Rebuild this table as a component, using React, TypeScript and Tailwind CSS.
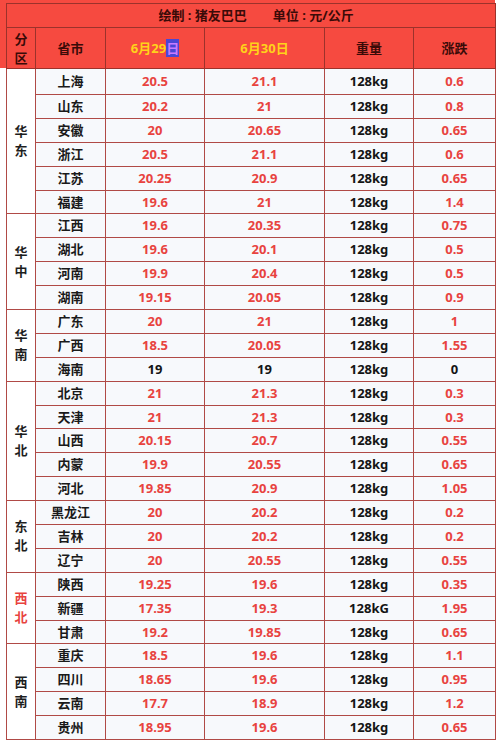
import React from 'react';

type Row = { city: string; d29: string; d30: string; kg?: string; diff: string; black?: boolean };
type Group = { region: string; red?: boolean; rows: Row[] };

const groups: Group[] = [
  {
    region: '华东',
    rows: [
      { city: '上海', d29: '20.5', d30: '21.1', diff: '0.6' },
      { city: '山东', d29: '20.2', d30: '21', diff: '0.8' },
      { city: '安徽', d29: '20', d30: '20.65', diff: '0.65' },
      { city: '浙江', d29: '20.5', d30: '21.1', diff: '0.6' },
      { city: '江苏', d29: '20.25', d30: '20.9', diff: '0.65' },
      { city: '福建', d29: '19.6', d30: '21', diff: '1.4' },
    ],
  },
  {
    region: '华中',
    rows: [
      { city: '江西', d29: '19.6', d30: '20.35', diff: '0.75' },
      { city: '湖北', d29: '19.6', d30: '20.1', diff: '0.5' },
      { city: '河南', d29: '19.9', d30: '20.4', diff: '0.5' },
      { city: '湖南', d29: '19.15', d30: '20.05', diff: '0.9' },
    ],
  },
  {
    region: '华南',
    rows: [
      { city: '广东', d29: '20', d30: '21', diff: '1' },
      { city: '广西', d29: '18.5', d30: '20.05', diff: '1.55' },
      { city: '海南', d29: '19', d30: '19', diff: '0', black: true },
    ],
  },
  {
    region: '华北',
    rows: [
      { city: '北京', d29: '21', d30: '21.3', diff: '0.3' },
      { city: '天津', d29: '21', d30: '21.3', diff: '0.3' },
      { city: '山西', d29: '20.15', d30: '20.7', diff: '0.55' },
      { city: '内蒙', d29: '19.9', d30: '20.55', diff: '0.65' },
      { city: '河北', d29: '19.85', d30: '20.9', diff: '1.05' },
    ],
  },
  {
    region: '东北',
    rows: [
      { city: '黑龙江', d29: '20', d30: '20.2', diff: '0.2' },
      { city: '吉林', d29: '20', d30: '20.2', diff: '0.2' },
      { city: '辽宁', d29: '20', d30: '20.55', diff: '0.55' },
    ],
  },
  {
    region: '西北',
    red: true,
    rows: [
      { city: '陕西', d29: '19.25', d30: '19.6', diff: '0.35' },
      { city: '新疆', d29: '17.35', d30: '19.3', kg: '128kG', diff: '1.95' },
      { city: '甘肃', d29: '19.2', d30: '19.85', diff: '0.65' },
    ],
  },
  {
    region: '西南',
    rows: [
      { city: '重庆', d29: '18.5', d30: '19.6', diff: '1.1' },
      { city: '四川', d29: '18.65', d30: '19.6', diff: '0.95' },
      { city: '云南', d29: '17.7', d30: '18.9', diff: '1.2' },
      { city: '贵州', d29: '18.95', d30: '19.6', diff: '0.65' },
    ],
  },
];

const cell = 'border border-[#b04a46] p-0 text-center align-middle';
const head = 'border border-[#9c322b] p-0 text-center align-middle text-[#3a0b08]';

export default function App() {
  let first = true;
  return (
    <div className="h-[743px] w-[500px] overflow-hidden bg-white">
      <div className="w-[495px] bg-[linear-gradient(to_bottom,#f64a40_0,#f64a40_68px,#ffffff_68px)] pl-[6px] pt-[3px]">
        <table className="w-[489px] table-fixed border-collapse font-['Noto_Sans','Noto_Sans_CJK_SC',sans-serif] text-[13px] font-bold leading-none">
          <colgroup>
            <col className="w-[29px]" />
            <col className="w-[70px]" />
            <col className="w-[99px]" />
            <col className="w-[120px]" />
            <col className="w-[89px]" />
            <col className="w-[82px]" />
          </colgroup>
          <thead>
            <tr className="h-[24px] bg-[#f64a40]">
              <td colSpan={6} className={head}>
                <div className="flex justify-center gap-[26px] pl-[10px]">
                  <span>绘制 : 猪友巴巴</span>
                  <span>单位 : 元/公斤</span>
                </div>
              </td>
            </tr>
            <tr className="h-[41px] bg-[#f64a40]">
              <td className={head}>
                <div className="flex flex-col items-center gap-[6px] pt-[2px]">
                  <span>分</span>
                  <span>区</span>
                </div>
              </td>
              <td className={head}>省市</td>
              <td className={head}>
                <span className="text-[#ffd21a]">6月29</span>
                <span className="bg-[#4b46d6] text-[#c77cff]">日</span>
              </td>
              <td className={`${head} text-[#ffd21a]`}>6月30日</td>
              <td className={head}>重量</td>
              <td className={head}>涨跌</td>
            </tr>
          </thead>
          <tbody>
            {groups.map((g) =>
              g.rows.map((r, i) => {
                const h = first ? 'h-[26px]' : 'h-[23.9px]';
                first = false;
                const num = r.black ? 'text-[#141414]' : 'text-[#e8433f]';
                return (
                  <tr key={r.city} className={h}>
                    {i === 0 && (
                      <td rowSpan={g.rows.length} className={`${cell} bg-white ${g.red ? 'text-[#e8433f]' : 'text-[#1e1e1e]'}`}>
                        <div className="flex flex-col items-center gap-[6px]">
                          <span>{g.region[0]}</span>
                          <span>{g.region[1]}</span>
                        </div>
                      </td>
                    )}
                    <td className={`${cell} bg-[#f7f9fc] text-[#1a1a1a]`}>{r.city}</td>
                    <td className={`${cell} bg-[#f7f9fc] ${num}`}>{r.d29}</td>
                    <td className={`${cell} bg-[#f7f9fc] ${num}`}>{r.d30}</td>
                    <td className={`${cell} bg-[#f7f9fc] text-[#141414]`}>{r.kg ?? '128kg'}</td>
                    <td className={`${cell} bg-[#f7f9fc] ${num}`}>{r.diff}</td>
                  </tr>
                );
              })
            )}
          </tbody>
        </table>
      </div>
    </div>
  );
}
